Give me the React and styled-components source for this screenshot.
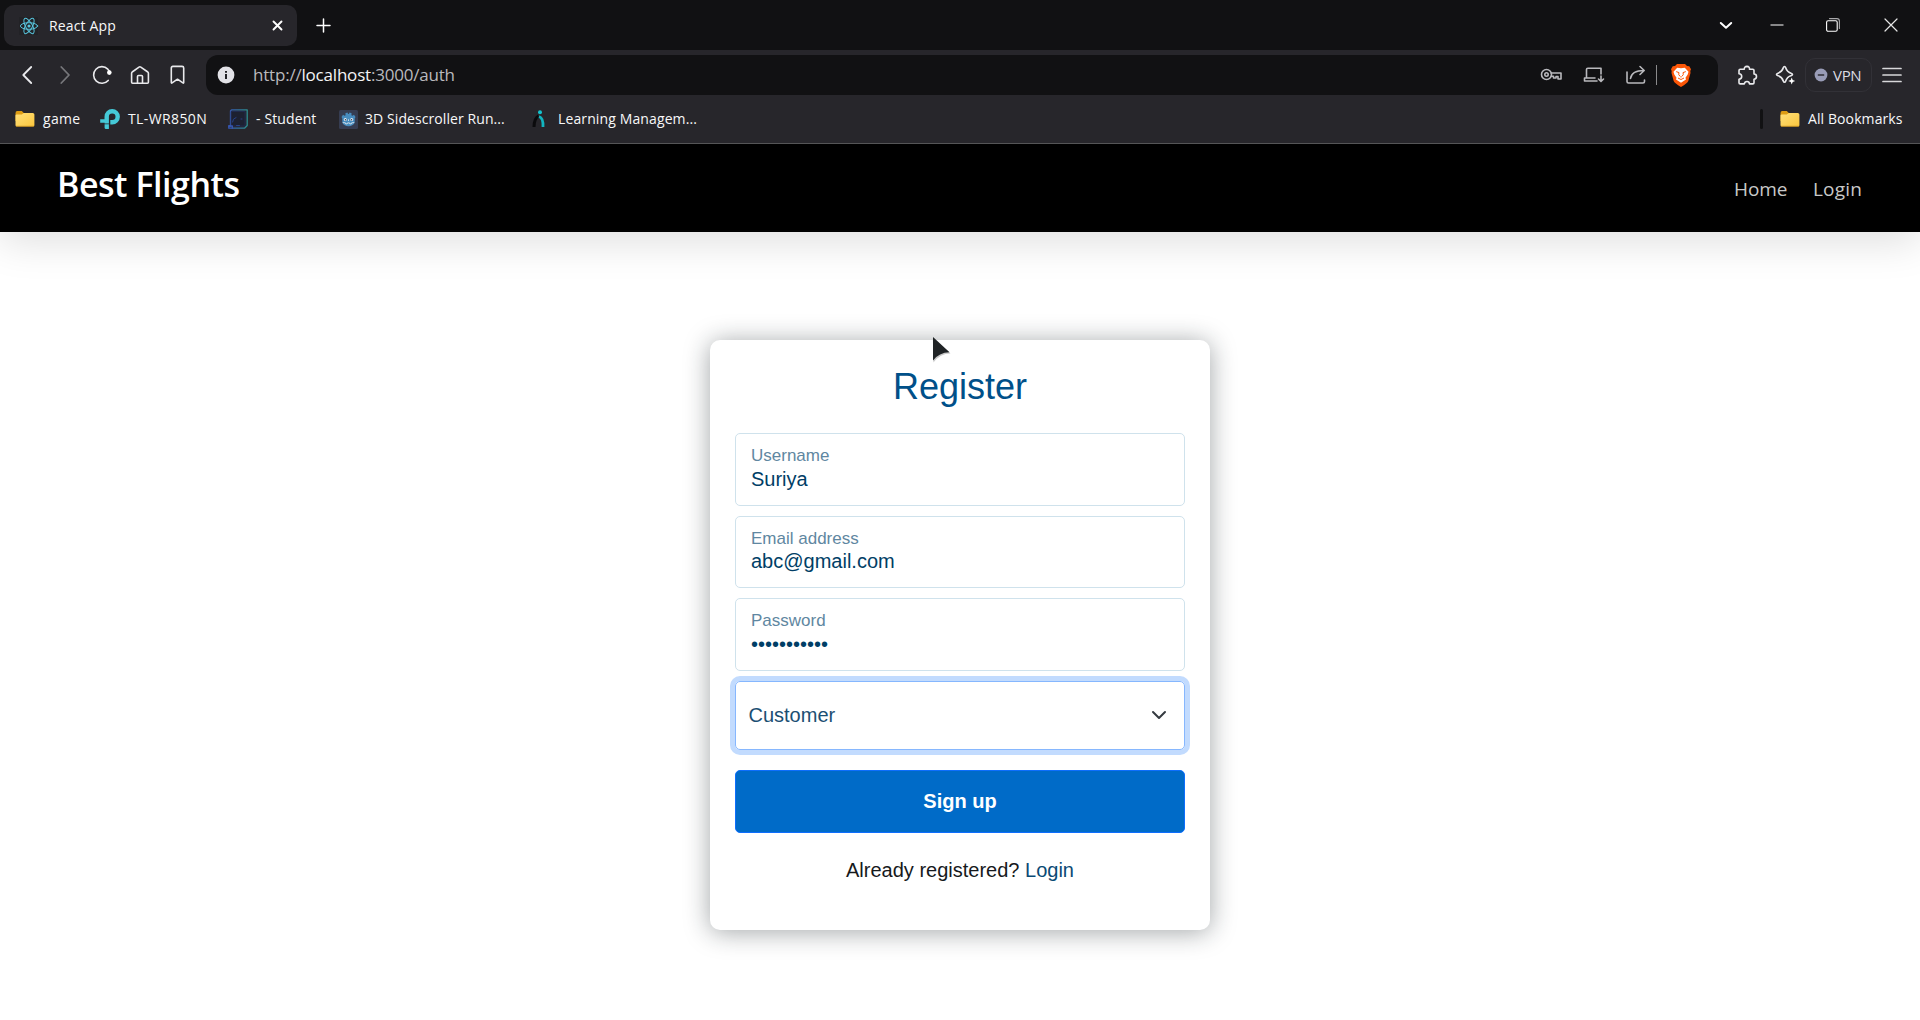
import React from "react";
import styled, { createGlobalStyle } from "styled-components";

const GlobalStyle = createGlobalStyle`
  * { box-sizing: border-box; }
  body { margin: 0; background: #fff; overflow: hidden; }
  svg { display: block; flex: none; }
`;

const uiFont = `"Open Sans", "Noto Sans", sans-serif`;
const formFont = `"Liberation Sans", Arial, sans-serif`;

const Screen = styled.div`
  width: 1920px;
  height: 1020px;
  display: flex;
  flex-direction: column;
  background: #fff;
  overflow: hidden;
`;

/* ---------- browser chrome ---------- */

const Chrome = styled.div`
  height: 144px;
  flex: none;
  background: #27262b;
  border-bottom: 1px solid #555557;
  font-family: ${uiFont};
  color: #f8f8f9;
  position: relative;
  z-index: 2;
`;

const TabStrip = styled.div`
  height: 50px;
  background: #111113;
  display: flex;
  align-items: flex-start;
  padding: 5px 22px 0 4px;
`;

const Tab = styled.div`
  width: 293px;
  height: 41px;
  border-radius: 10px;
  background: #27262b;
  display: flex;
  align-items: center;
  padding: 0 14px 0 15px;
  gap: 10px;
`;

const TabTitle = styled.span`
  flex: 1;
  font-size: 14px;
  line-height: 20px;
  letter-spacing: 0.15px;
  white-space: nowrap;
`;

const NewTab = styled.div`
  padding: 13px 0 0 19px;
  flex: 1;
`;

const WindowControls = styled.div`
  display: flex;
  height: 39px;
  align-items: center;
`;

const Control = styled.div`
  width: 14px;
  margin-left: ${(p) => p.$before || 0}px;
`;

const Toolbar = styled.div`
  height: 50px;
  display: flex;
  align-items: center;
  padding: 0 17px 0 17px;
`;

const NavButtons = styled.div`
  display: flex;
  gap: 17.5px;
  width: 189px;
`;

const AddressBar = styled.div`
  width: 1512px;
  height: 40px;
  border-radius: 12px;
  background: #111113;
  display: flex;
  align-items: center;
  padding: 0 27px 0 11px;
`;

const Url = styled.span`
  flex: 1;
  margin-left: 18px;
  padding-bottom: 1px;
  font-size: 17px;
  line-height: 24px;
  letter-spacing: -0.2px;
  color: #b9b9bd;
  b { font-weight: 400; color: #f4f4f6; }
`;

const ActionIcon = styled.div`
  margin-left: 21px;
`;

const Divider = styled.div`
  width: 1px;
  height: 20px;
  background: #8a8a8c;
  margin: 0 14px 0 10px;
`;

const Actions = styled.div`
  display: flex;
  align-items: center;
  margin-left: 19px;
`;

const SparkleSlot = styled.div`
  margin-left: 17px;
`;

const Vpn = styled.div`
  width: 67px;
  height: 34px;
  margin: 0 10px 0 9px;
  border: 1px solid #323137;
  border-radius: 10px;
  display: flex;
  align-items: center;
  padding-left: 8px;
  gap: 5px;
  font-size: 15px;
  letter-spacing: -0.3px;
  color: #dcdce2;
`;

const Bookmarks = styled.div`
  height: 38px;
  display: flex;
  align-items: center;
  padding: 0 17px 0 15px;
`;

const Bookmark = styled.div`
  width: ${(p) => p.$width}px;
  display: flex;
  align-items: center;
  gap: ${(p) => p.$gap}px;
  font-size: 14px;
  line-height: 20px;
  letter-spacing: ${(p) => p.$track || 0}px;
  white-space: nowrap;
`;

const BookmarkDivider = styled.div`
  width: 3px;
  height: 20px;
  border-radius: 2px;
  background: #111113;
  margin: 0 17px 0 auto;
`;

/* ---------- page ---------- */

const Header = styled.header`
  height: 88px;
  flex: none;
  background: #000;
  box-shadow: 0 10px 40px rgba(0, 0, 0, 0.13);
  display: flex;
  justify-content: space-between;
  padding: 0 57px;
  font-family: ${uiFont};
`;

const Brand = styled.h1`
  margin: 0;
  padding-top: 17px;
  font-size: 34px;
  line-height: 46px;
  font-weight: 600;
  letter-spacing: -0.48px;
  color: #fff;
`;

const Nav = styled.nav`
  display: flex;
  gap: 25px;
  padding-top: 31px;
`;

const NavLink = styled.a`
  width: ${(p) => p.$width}px;
  font-size: 19px;
  line-height: 28px;
  letter-spacing: ${(p) => p.$track}px;
  color: #c8c8c8;
  white-space: nowrap;
`;

const Main = styled.main`
  flex: 1;
  display: flex;
  justify-content: center;
  align-items: flex-start;
  padding-top: 108px;
  font-family: ${formFont};
`;

const Card = styled.div`
  position: relative;
  width: 500px;
  height: 590px;
  padding: 25px;
  border-radius: 10px;
  background: #fff;
  box-shadow: 0 2px 26px rgba(20, 30, 36, 0.4);
`;

const Title = styled.h2`
  margin: 0 0 24px;
  font-size: 36px;
  line-height: 44px;
  font-weight: 400;
  text-align: center;
  color: #005089;
`;

const Field = styled.div`
  height: 72.5px;
  margin-bottom: 10px;
  border: 1px solid #cfe2ec;
  border-radius: 5px;
  padding: 11px 15px;
  color: #003e66;
`;

const Label = styled.div`
  font-size: 17px;
  line-height: 22px;
  color: #5f87a1;
`;

const Value = styled.div`
  margin-top: ${(p) => p.$lift || 0}px;
  font-size: 20px;
  line-height: 24px;
`;

const Select = styled.div`
  height: 69px;
  border: 1px solid #86b7fe;
  border-radius: 5px;
  box-shadow: 0 0 0 5px #c2dbfe;
  display: flex;
  align-items: center;
  justify-content: space-between;
  padding: 0 17px 0 12.500px;
  font-size: 20px;
  color: #1c4f73;
`;

const Submit = styled.button`
  display: block;
  width: 100%;
  height: 63px;
  margin-top: 20px;
  padding: 0;
  border: 1px solid #0d6efd;
  border-radius: 5px;
  background: #006bc8;
  color: #fff;
  font: 700 20px/30px ${formFont};
`;

const Footnote = styled.p`
  margin: 22px 0 0;
  font-size: 20px;
  line-height: 30px;
  text-align: center;
  color: #16191c;
  a { color: #0a4a75; }
`;

const Pointer = styled.div`
  position: absolute;
  left: 222px;
  top: -4px;
`;

/* ---------- icons ---------- */

const Line = ({ w = 20, h = 20, c = "#e9e9ec", s = 1.5, children, ...rest }) => (
  <svg width={w} height={h} viewBox={`0 0 ${w} ${h}`} fill="none" stroke={c} strokeWidth={s} strokeLinecap="round" strokeLinejoin="round" {...rest}>
    {children}
  </svg>
);

const ReactLogo = () => (
  <Line w={20} h={20} c="#58c4dc" s={1}>
    <rect x="0" y="1" width="19" height="18" fill="#222226" stroke="none" />
    <ellipse cx="10" cy="10" rx="8.6" ry="3.3" />
    <ellipse cx="10" cy="10" rx="8.6" ry="3.3" transform="rotate(60 10 10)" />
    <ellipse cx="10" cy="10" rx="8.6" ry="3.3" transform="rotate(120 10 10)" />
    <circle cx="10" cy="10" r="1.6" fill="#58c4dc" stroke="none" />
  </Line>
);

const Folder = () => (
  <svg width="20" height="18" viewBox="0 0 20 18">
    <path d="M.5 3.2Q.5 1 2.2 1h4.6l2 2H18v8H.5Z" fill="#dd9c13" />
    <path d="M.5 5.5Q.5 4.6 1.6 4.6h5.2L8.8 3h9q1.6 0 1.6 1.5v10.700q0 1.400-1.500 1.400H2q-1.500 0-1.500-1.400Z" fill="url(#folderFace)" />
    <path d="M1 16.300h17.800" stroke="#c58d1c" strokeWidth=".8" />
    <defs>
      <linearGradient id="folderFace" x1="0" y1="0" x2="1" y2="1">
        <stop offset="0" stopColor="#ffe07a" />
        <stop offset="1" stopColor="#fbc63d" />
      </linearGradient>
    </defs>
  </svg>
);

const TpLink = () => (
  <svg width="20" height="20" viewBox="0 0 20 20" fill="#45c9d7">
    <path fillRule="evenodd" d="M4.500 9.500V7.800A7.700 7.700 0 1 1 12.200 15.400H10.300V11H12.200A3.300 3.300 0 1 0 8.900 7.800V14.500H4.600V13.800H.2V10.300H4.500Z" />
    <path d="M4.600 15.300H8.900V20H6Q4.600 20 4.600 18.500Z" />
  </svg>
);

const StudentMark = () => (
  <Line w={20} h={20} s={1.3}>
    <defs>
      <linearGradient id="studentEdge" x1="0" y1="0" x2="1" y2="0">
        <stop offset="0" stopColor="#3657b5" />
        <stop offset="1" stopColor="#2c8b8f" />
      </linearGradient>
    </defs>
    <path d="M3.500 .8H19.200V16.500L16.500 19.200H.8V17H2.500V2Z" stroke="url(#studentEdge)" />
    <path d="M3.500 2.500H17V17H3.500Z" fill="#1d2131" stroke="#222c55" strokeWidth=".8" />
    <path d="M8 8.500Q4.500 9.500 4.500 13M8.500 16.500h3M13 10h1" stroke="#27418a" strokeWidth="1" />
    <path d="M.8 17h3.500v2.200" stroke="#3657b5" />
  </Line>
);

const Godot = () => (
  <svg width="19" height="19" viewBox="0 0 19 19">
    <rect width="19" height="19" rx="1.500" fill="#363d52" />
    <path d="M2.500 7 4 4.800l1.600.9 1-.5-.2-2 2-.7.8 1.500h.6l.8-1.500 2 .7-.2 2 1 .5 1.600-.9L16.500 7l-.8 1.600v4.200q-1.800 3.400-6.200 3.400t-6.200-3.400V8.600Z" fill="#478cbf" />
    <circle cx="6.300" cy="9.600" r="1.500" fill="#e8eef4" />
    <circle cx="12.700" cy="9.600" r="1.500" fill="#e8eef4" />
    <circle cx="6.500" cy="9.700" r=".8" fill="#363d52" />
    <circle cx="12.500" cy="9.700" r=".8" fill="#363d52" />
    <path d="M9.500 9.300v1.700M3.800 12.600l2.600.2.300 1.100h1.500l.3-1h2l.3 1h1.500l.3-1.100 2.600-.2" stroke="#e8eef4" strokeWidth=".8" fill="none" />
  </svg>
);

const LearningMark = () => (
  <svg width="14" height="20" viewBox="0 0 14 20" fill="none">
    <circle cx="8" cy="3.200" r="2" fill="#13c4cf" />
    <path d="M6.500 7Q2.200 9 2 18" stroke="#0b0b0d" strokeWidth="3" />
    <path d="M7 7.500Q11.500 9 11 18" stroke="#12b5bf" strokeWidth="2.800" />
  </svg>
);

const InfoDot = () => (
  <svg width="18" height="18" viewBox="0 0 18 18">
    <circle cx="9" cy="9" r="8.400" fill="#e2e2e7" />
    <path d="M8 5h2v1.800H8ZM8 8h2v5H8Z" fill="#222226" />
  </svg>
);

const BraveLion = () => (
  <svg width="20" height="23" viewBox="0 0 20 23">
    <path d="M6 0H14L16 2 18.300 2.200 20 5.200 19.300 7 19.500 9 17.300 17Q16.500 19 10 23 3.500 19 2.700 17L.5 9 .7 7 0 5.200 1.700 2.200 4 2Z" fill="#fb5607" />
    <path d="M6.200 3.800 10 4.300l3.800-.5 3.700 4-.8 2.800-2.200 3.200.5 1.700L10 18.700 5 15.500l.5-1.700-2.200-3.200-.8-2.800Z" fill="#fff" />
    <path d="M5.200 7.600 8 8.600 7.700 10.500 9 12.300M14.800 7.600 12 8.600l.3 1.900L11 12.300M7 14l3 1.500 3-1.500M10 12.200v1.300" stroke="#fb5607" strokeWidth="1" fill="none" />
  </svg>
);

const BrowserChrome = () => (
  <Chrome>
    <TabStrip>
      <Tab>
        <ReactLogo />
        <TabTitle>React App</TabTitle>
        <Line w={11} h={11} s={1.900} c="#fff"><path d="M1.500 1.500l8 8M9.500 1.500l-8 8" /></Line>
      </Tab>
      <NewTab><Line w={15} h={15} s={1.500} c="#fff"><path d="M7.500 1v13M1 7.500h13" /></Line></NewTab>
      <WindowControls>
        <Control><Line w={14} h={14} s={2} c="#fff"><path d="M1.800 5 7 9.800 12.200 5" /></Line></Control>
        <Control $before={37}><Line w={14} h={14} s={1} c="#fff" strokeLinecap="butt"><path d="M.5 7h13" /></Line></Control>
        <Control $before={42}>
          <Line w={14} h={14} s={1.100} c="#fff">
            <path d="M3.500 .6h7.500q2.400 0 2.400 2.400v7.500" stroke="#a9a9ab" />
            <rect x=".6" y="2.700" width="10.600" height="10.600" rx="1.500" />
          </Line>
        </Control>
        <Control $before={44}><Line w={14} h={14} s={1.200} c="#e6e6e6"><path d="M1 1l12 12M13 1L1 13" /></Line></Control>
      </WindowControls>
    </TabStrip>

    <Toolbar>
      <NavButtons>
        <Line s={1.800}><path d="M14.200 2 6.300 10l7.900 8" /></Line>
        <Line s={1.800} c="#77777b"><path d="M6.300 2 14 10l-7.700 8" /></Line>
        <Line s={1.600}>
          <path d="M16.200 15.400A8.300 8.300 0 1 1 15.800 4.100L17.500 6.500" />
          <circle cx="17.300" cy="7.600" r="2.300" fill="#fff" stroke="none" />
        </Line>
        <Line s={1.600}>
          <path d="M1.600 8.200Q1.600 7.500 2.200 7L9 2.100q.9-.6 1.800 0L17.800 7q.6.500.6 1.200V17.200q0 1-1 1H2.600q-1 0-1-1Z" />
          <path d="M7.500 18V11.500q0-1 1-1h3q1 0 1 1V18" />
        </Line>
        <Line s={1.600}><path d="M4.300 17.600V3q0-1.600 1.600-1.600h9.200q1.600 0 1.600 1.600V17.600q0 .8-.8.300L10.500 14.200l-5.400 3.700q-.8.500-.8-.3Z" /></Line>
      </NavButtons>
      <AddressBar>
        <InfoDot />
        <Url>http://<b>localhost</b>:3000/auth</Url>
        <Line w={22} s={1.600} c="#b9b9bd">
          <circle cx="6.500" cy="9.500" r="5" />
          <circle cx="6.500" cy="9.500" r="1.700" />
          <path d="M11 8h10v6h-3v-2.500h-2V13h-2.500v-1.800H11.200" />
        </Line>
        <ActionIcon>
          <Line w={22} s={1.600} c="#b9b9bd">
            <path d="M3.500 12.500V4.500q0-1.300 1.300-1.300H18V9M1.500 15.500V13H12M1.500 16H14M18 11v5M15.500 14l2.500 2.500 2.500-2.500" />
          </Line>
        </ActionIcon>
        <ActionIcon>
          <Line w={20} s={1.600} c="#b9b9bd">
            <path d="M1 7V16.500q0 1.500 1.500 1.500H17q1.500 0 1.500-1.500V15M4.500 13.500Q5.500 5.500 18 5.500M14 1.500l4.200 4-4.200 4" />
          </Line>
        </ActionIcon>
        <Divider />
        <BraveLion />
      </AddressBar>
      <Actions>
        <Line w={21} s={1.600}>
          <path d="M2 5.500q0-1.200 1.200-1.200H7.300Q7 1.500 10 1.400 12.800 1.500 12.500 4.300H15.800q1.200 0 1.200 1.200V9Q19.500 9 19.500 11.500T17 14.200v3.500q0 1.200-1.200 1.200H12.500Q12.300 16.500 10 16.500T7.300 18.900H3.200Q2 18.900 2 17.700V14.200Q4.700 14 4.700 11.500T2 8.800Z" />
        </Line>
        <SparkleSlot>
          <Line w={21} s={1.600}>
            <path d="M9.500 1.500q.8 0 1.100 1 1.300 4.500 5.900 5.900 1 .3 1 1t-1 1q-4.600 1.400-5.900 5.800-.3 1-1.100 1t-1.100-1Q7.100 11.800 2.500 10.400q-1-.3-1-1t1-1Q7.100 7 8.400 2.500q.3-1 1.100-1Z" />
            <circle cx="16.700" cy="16" r="4" fill="#27262b" stroke="none" />
            <path d="M16.700 12.500l1 2.500 2.500 1-2.500 1-1 2.500-1-2.500-2.500-1 2.500-1Z" fill="#fff" stroke="none" />
          </Line>
        </SparkleSlot>
        <Vpn>
          <svg width="14" height="14" viewBox="0 0 14 14">
            <circle cx="7" cy="7" r="6.400" fill="#999cb7" />
            <path d="M3.800 7h6.400" stroke="#27262b" strokeWidth="1.400" />
          </svg>
          <span>VPN</span>
        </Vpn>
        <Line w={20} s={1.700} c="#d8d8da"><path d="M1 3.500h18M1 10h18M1 16.500h18" /></Line>
      </Actions>
    </Toolbar>

    <Bookmarks>
      <Bookmark $width={85} $gap={8} $track={0.3}><Folder />game</Bookmark>
      <Bookmark $width={128} $gap={8} $track={0.38}><TpLink />TL-WR850N</Bookmark>
      <Bookmark $width={111} $gap={8} $track={0.12}><StudentMark />- Student</Bookmark>
      <Bookmark $width={193} $gap={7} $track={0.08}><Godot />3D Sidescroller Run...</Bookmark>
      <Bookmark $width={170} $gap={12} $track={0.12}><LearningMark />Learning Managem...</Bookmark>
      <BookmarkDivider />
      <Bookmark $width={123} $gap={8} $track={0.1}><Folder />All Bookmarks</Bookmark>
    </Bookmarks>
  </Chrome>
);

const fields = [
  { label: "Username", value: "Suriya", lift: 0 },
  { label: "Email address", value: "abc@gmail.com", lift: -1 },
  { label: "Password", value: "•••••••••••", lift: -0.5 },
];

export default function App() {
  return (
    <Screen>
      <GlobalStyle />
      <BrowserChrome />
      <Header>
        <Brand>Best Flights</Brand>
        <Nav>
          <NavLink $width={54} $track={-0.1}>Home</NavLink>
          <NavLink $width={50} $track={0.2}>Login</NavLink>
        </Nav>
      </Header>
      <Main>
        <Card>
          <Title>Register</Title>
          {fields.map((f) => (
            <Field key={f.label}>
              <Label>{f.label}</Label>
              <Value $lift={f.lift}>{f.value}</Value>
            </Field>
          ))}
          <Select>
            Customer
            <Line w={16} h={16} s={2} c="#343a40"><path d="M2 5l6 6 6-6" /></Line>
          </Select>
          <Submit type="button">Sign up</Submit>
          <Footnote>Already registered? <a>Login</a></Footnote>
          <Pointer>
            <svg width="20" height="28" viewBox="0 0 20 28">
              <path d="M.8 2 18.500 17.500Q8 17.500 1.500 26.500Z" fill="#c9c9c9" />
              <path d="M1 1 17.500 16.300Q7 16.500 1 24.500Z" fill="#202426" />
            </svg>
          </Pointer>
        </Card>
      </Main>
    </Screen>
  );
}
